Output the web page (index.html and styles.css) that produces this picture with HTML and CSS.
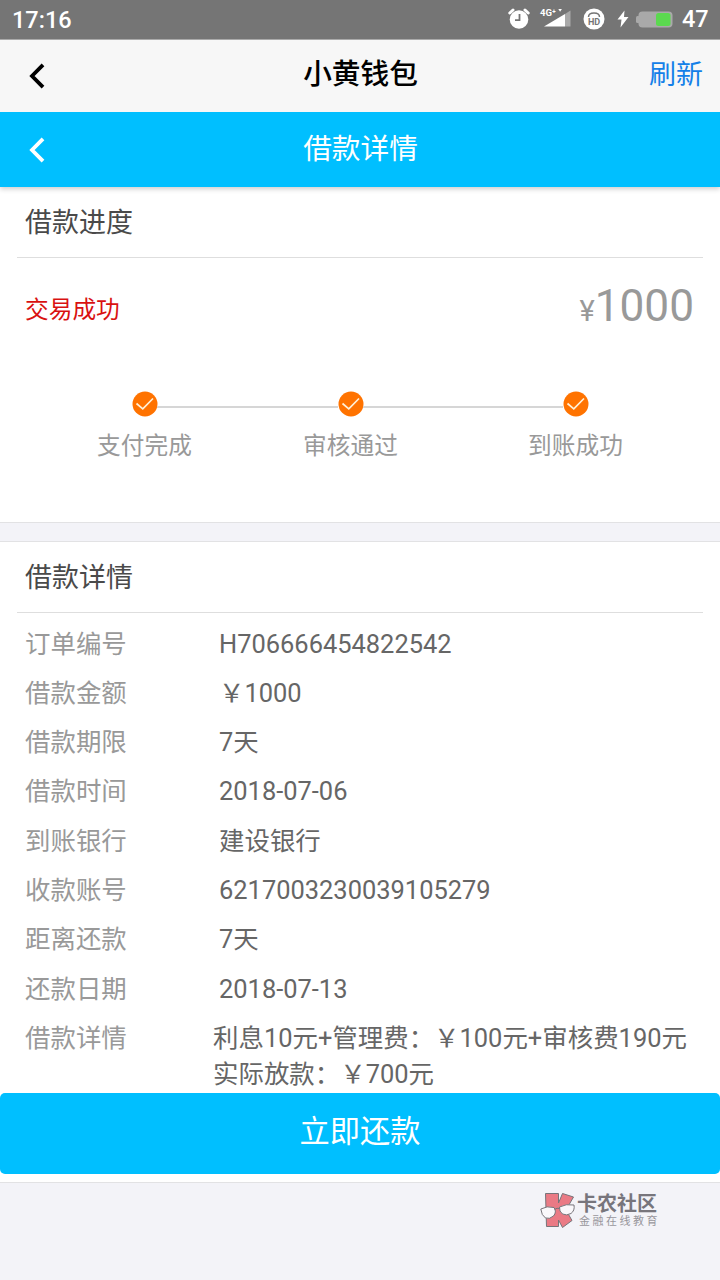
FILE: index.html
```html
<!DOCTYPE html>
<html lang="zh-CN">
<head>
<meta charset="utf-8">
<title>小黄钱包</title>
<link rel="stylesheet" href="styles.css">
</head>
<body>
<div class="statusbar">
  <span class="clock">17:16</span>
  <div class="status-icons">
    <svg class="i-alarm" width="22" height="22" viewBox="0 0 22 22"><circle cx="11" cy="11.500" r="9.300" fill="#fff"/><path d="M1.800 5 5 2M20.200 5 17 2" stroke="#fff" stroke-width="3" stroke-linecap="round"/><path d="M11.500 6v6.200H7" stroke="#757575" stroke-width="1.800" fill="none"/></svg>
    <div class="signal"><span>4G⁺</span><svg width="31" height="20" viewBox="0 0 31 20"><path d="M4 18.500 25 6V18.500Z" fill="#fff"/><path d="M25 6 30.500 2.500V18.500H25Z" fill="#a9a9a9"/><path d="M18.300 1h3.600l-1.800 2.800Z" fill="#fff"/></svg></div>
    <svg class="i-hd" width="22" height="22" viewBox="0 0 22 22"><circle cx="11" cy="11" r="10.500" fill="#fff"/><path d="M5.500 9Q5.500 5 11 5T16.500 9" fill="none" stroke="#757575" stroke-width="1.500"/><text x="11" y="16.800" text-anchor="middle">HD</text></svg>
    <svg class="i-bolt" width="12" height="18" viewBox="0 0 12 18"><path d="M7.500.5.5 9.500H4.500L3.500 17.500 11.500 7H7Z" fill="#fff"/></svg>
    <svg class="i-battery" width="37" height="17" viewBox="0 0 37 17"><rect x="2.500" y=".5" width="34" height="16" rx="4" fill="#a9a9a9"/><rect x="0" y="5" width="4" height="7" rx="1.500" fill="#a9a9a9"/><rect x="20" y="2" width="14.500" height="13" rx="2.500" fill="#5bd94f"/></svg>
    <span class="battery-level">47</span>
  </div>
</div>
<nav class="navbar">
  <svg class="back" width="17" height="26" viewBox="0 0 17 26"><path d="M15 1.800 4 13 15 24.200"/></svg>
  <span class="nav-title">小黄钱包</span>
  <span class="refresh">刷新</span>
</nav>
<header class="header">
  <svg class="back" width="17" height="26" viewBox="0 0 17 26"><path d="M15 1.800 4 13 15 24.200"/></svg>
  <span class="nav-title">借款详情</span>
</header>
<section class="card progress">
  <h2>借款进度</h2>
  <div class="summary"><span class="state">交易成功</span><span class="amount"><small>¥</small>1000</span></div>
  <div class="steps">
    <div class="step"><svg width="26" height="26" viewBox="0 0 26 26"><circle cx="13" cy="13" r="12.500"/><path d="M4.500 12.500 10.800 17.800 21 7.500"/></svg><span>支付完成</span></div>
    <i class="bar bar-a"></i>
    <div class="step"><svg width="26" height="26" viewBox="0 0 26 26"><circle cx="13" cy="13" r="12.500"/><path d="M4.500 12.500 10.800 17.800 21 7.500"/></svg><span>审核通过</span></div>
    <i class="bar bar-b"></i>
    <div class="step"><svg width="26" height="26" viewBox="0 0 26 26"><circle cx="13" cy="13" r="12.500"/><path d="M4.500 12.500 10.800 17.800 21 7.500"/></svg><span>到账成功</span></div>
  </div>
</section>
<section class="card details">
  <h2>借款详情</h2>
  <dl>
    <div class="row"><dt>订单编号</dt><dd>H706666454822542</dd></div>
    <div class="row"><dt>借款金额</dt><dd>￥1000</dd></div>
    <div class="row"><dt>借款期限</dt><dd>7天</dd></div>
    <div class="row"><dt>借款时间</dt><dd>2018-07-06</dd></div>
    <div class="row"><dt>到账银行</dt><dd>建设银行</dd></div>
    <div class="row"><dt>收款账号</dt><dd>6217003230039105279</dd></div>
    <div class="row"><dt>距离还款</dt><dd>7天</dd></div>
    <div class="row"><dt>还款日期</dt><dd>2018-07-13</dd></div>
    <div class="row last"><dt>借款详情</dt><dd>利息10元+管理费：￥100元+审核费190元<br>实际放款：￥700元</dd></div>
  </dl>
  <button class="repay">立即还款</button>
</section>
<footer class="brand">
  <svg width="36" height="37" viewBox="0 0 36 37"><g stroke="#77747a" stroke-width="1" stroke-linejoin="round"><path d="M5.500 1.500H18.500V11L22.500 1.500 33.500 5 26 18 32 28.500 22.500 35.500 18.500 28V34.500H6.500Z" fill="#ea7a85"/><path d="M.8 17Q7 13.500 14 15.500 17 20 13.500 24 9.500 27.500 5.500 26 1.500 23.500.8 17Z" fill="#faf8fb"/><path d="M19.500 15Q26 11.500 34 13 35 18.500 31 21.500 26.500 24 22.500 22 19 19.500 19.500 15Z" fill="#faf8fb"/><path d="M14.500 17.500Q17 15.500 19.500 16.500" fill="none"/></g></svg>
  <div class="brand-text"><strong>卡农社区</strong><span>金融在线教育</span></div>
</footer>
</body>
</html>
```

FILE: styles.css
```css
* { box-sizing: border-box; }
body { margin: 0; width: 720px; height: 1280px; overflow: hidden; background: #f3f3f8; font-family: Roboto, "Noto Sans CJK SC", sans-serif; }
svg { display: block; flex: none; }
.statusbar { height: 40px; background: #757575; border-bottom: 1px solid #aaa; color: #fff; display: flex; justify-content: space-between; padding: 0 11px 0 12px; align-items: center; font-weight: 500; font-size: 23.500px; }
.clock { line-height: 38px; }
.status-icons { display: flex; align-items: center; line-height: 38px; margin-top: -1px; }
.i-alarm { margin-right: 10px; }
.signal { display: grid; width: 31px; margin-right: 12px; margin-top: -2px; }
.signal > * { grid-area: 1 / 1; }
.signal span { font-size: 9.500px; line-height: 9px; font-weight: 700; }
.i-hd { margin-right: 12px; }
.i-hd text { font: 700 9px Roboto, sans-serif; fill: #757575; }
.i-bolt { margin-right: 7px; }
.i-battery { margin-right: 9px; }
.battery-level { width: 27px; }
.navbar, .header { display: grid; grid-template-columns: 120px 1fr 120px; align-items: center; padding: 0 17px 0 28px; }
.navbar { height: 72px; background: #f7f7f7; color: #000; }
.header { height: 75px; background: #00bfff; color: #fff; box-shadow: 0 2px 5px rgba(0,0,0,.2); clip-path: inset(0 0 -8px 0); position: relative; }
.back { fill: none; stroke: currentColor; stroke-width: 3.800; }
.nav-title { text-align: center; font-size: 28.700px; line-height: 40px; margin: -4px 10px 0 0; }
.navbar .nav-title { font-weight: 500; }
.header .nav-title { margin-top: -2px; }
.refresh { color: #1480e8; font-size: 27px; line-height: 40px; text-align: right; margin-top: -2px; }
.card { background: #fff; border-bottom: 1px solid #e2e2e4; }
.progress { height: 336px; }
.details { margin-top: 18px; border-top: 1px solid #e2e2e4; height: 642px; }
h2 { margin: 0 17px; padding: 0 8px; height: 71px; border-bottom: 1px solid #dedede; font-size: 27px; line-height: 72px; font-weight: 400; color: #4a4a4a; }
.summary { display: flex; justify-content: space-between; align-items: center; height: 96px; padding: 0 26px 0 25px; }
.state { color: #d91111; font-size: 23.700px; padding-top: 3px; }
.amount { color: #999; font-size: 44.200px; }
.amount small { font-size: 29px; }
.steps { display: flex; padding: 37px 0 0 97px; color: #999; font-size: 23.700px; }
.step { width: 95px; display: flex; flex-direction: column; align-items: center; line-height: 40px; white-space: nowrap; }
.step svg { margin-bottom: 9px; }
.step circle { fill: #ff7300; }
.step path { fill: none; stroke: #fff1d8; stroke-width: 1.700; }
.bar { height: 2px; background: #d6d6d6; margin: 15px -35px 0; }
.bar-a { width: 181px; }
.bar-b { width: 200px; }
dl { margin: 0; padding: 6.500px 0 0 25px; font-size: 25.450px; height: 480px; }
.row { display: flex; height: 49.330px; line-height: 49px; }
dt { width: 194px; color: #999; flex: none; }
dd { margin: 0; color: #666; white-space: nowrap; }
.last dt { width: 188px; }
.last dd { line-height: 36px; padding-top: 6px; }
.repay { display: block; width: 720px; height: 81px; border: 0; border-radius: 5px; background: #00bfff; color: #fff; font: 30.200px/40px Roboto, "Noto Sans CJK SC", sans-serif; padding: 0 0 3px; }
.brand { display: flex; padding: 9px 0 0 540px; }
.brand-text { display: flex; flex-direction: column; padding-left: 1px; color: #77757c; white-space: nowrap; }
.brand-text strong { font-size: 20px; line-height: 25px; font-weight: 700; }
.brand-text span { font-size: 11px; line-height: 12px; letter-spacing: 2.500px; padding-left: 2px; color: #98969c; margin-top: -1px; }
```
